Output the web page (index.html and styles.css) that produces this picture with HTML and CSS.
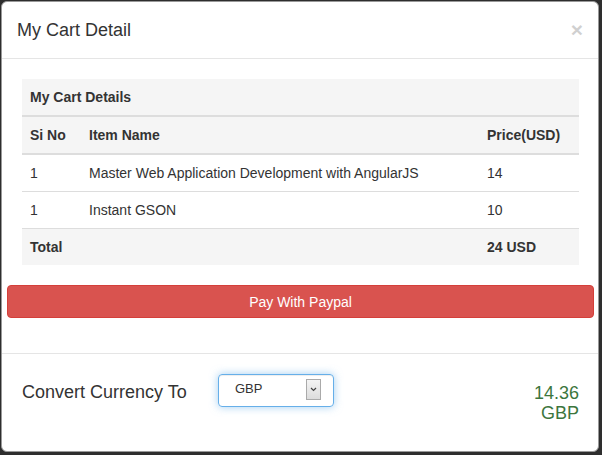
FILE: index.html
```html
<!DOCTYPE html>
<html>
<head>
<meta charset="utf-8">
<link rel="stylesheet" href="styles.css">
</head>
<body>
<div class="modal">
  <div class="modal-header">
    <h4 class="modal-title">My Cart Detail</h4>
    <span class="close">&times;</span>
  </div>
  <div class="modal-body">
    <table class="cart">
      <tr class="caption"><th colspan="3">My Cart Details</th></tr>
      <tr class="head"><th class="c1">Si No</th><th class="c2">Item Name</th><th class="c3">Price(USD)</th></tr>
      <tr><td>1</td><td>Master Web Application Development with AngularJS</td><td>14</td></tr>
      <tr><td>1</td><td>Instant GSON</td><td>10</td></tr>
      <tr class="total"><th>Total</th><th></th><th>24 USD</th></tr>
    </table>
  </div>
  <div class="pay-wrap"><button class="btn-pay">Pay With Paypal</button></div>
  <div class="modal-footer">
    <span class="conv-label">Convert Currency To</span>
    <div class="select">
      <span class="sel-text">GBP</span>
      <span class="sel-arrow"><svg width="7" height="5" viewBox="0 0 7 5"><path d="M1 1 L3.5 3.5 L6 1" fill="none" stroke="#444" stroke-width="1.2"/></svg></span>
    </div>
    <div class="result">14.36 GBP</div>
  </div>
</div>
</body>
</html>
```

FILE: styles.css
```css
* { box-sizing: border-box; }
html, body { margin: 0; padding: 0; }
body {
  background: #2e2e2e;
  font-family: "Liberation Sans", Arial, sans-serif;
  color: #333;
  font-size: 14px;
  line-height: 1.42857;
  height: 455px;
  padding: 1px 3px 3px 1px;
}
.modal {
  background: #fff;
  border: 1px solid #999;
  border-radius: 6px;
  height: 451px;
  display: flex;
  flex-direction: column;
}
.modal-header {
  padding: 15px 15px 15px 15px;
  border-bottom: 1px solid #e5e5e5;
  display: flex;
  justify-content: space-between;
  align-items: center;
  height: 57px;
}
.modal-title {
  margin: 0;
  font-size: 18px;
  font-weight: normal;
  line-height: 26px;
}
.close {
  font-size: 21px;
  font-weight: bold;
  color: #000;
  opacity: 0.18;
  line-height: 1;
  margin-right: 0;
  margin-top: -2px;
}
.modal-body {
  padding: 20px 19px 20px 20px;
}
.cart {
  width: 100%;
  border-collapse: collapse;
}
.cart th, .cart td {
  padding: 8px 8px;
  text-align: left;
  border-top: 1px solid #ddd;
  line-height: 20px;
}
.cart .caption th { border-top: 0; background: #f5f5f5; height: 36px; }
.cart .head th { border-top: 2px solid #ddd; border-bottom: 2px solid #ddd; background: #f5f5f5; }
.cart .c1 { width: 59px; }
.cart .c3 { width: 100px; }
.cart .total th { background: #f5f5f5; }
.pay-wrap {
  padding: 0 4px 0 5px;
}
.btn-pay {
  width: 100%;
  height: 33px;
  background: #d9534f;
  border: 1px solid #d43f3a;
  border-radius: 4px;
  color: #fff;
  font-family: "Liberation Sans", Arial, sans-serif;
  font-size: 14px;
  padding: 0;
}
.modal-footer {
  margin-top: 35px;
  border-top: 1px solid #e5e5e5;
  padding: 20px 19px 0 20px;
  display: flex;
  align-items: flex-start;
}
.conv-label {
  font-size: 18px;
  width: 196px;
  margin-top: 6px;
}
.select {
  width: 116px;
  height: 33px;
  border: 1px solid #66afe9;
  border-radius: 4px;
  box-shadow: inset 0 1px 1px rgba(0,0,0,.075), 0 0 8px rgba(102,175,233,.6);
  display: flex;
  align-items: center;
  padding: 0 12px 0 16px;
  justify-content: space-between;
  font-size: 13px;
  margin-top: 0;
}
.sel-text { margin-top: -2px; }
.sel-arrow {
  width: 15px;
  height: 21px;
  border: 1px solid #aaa;
  background: linear-gradient(#f4f4f4, #dcdcdc);
  display: flex;
  align-items: center;
  justify-content: center;
  margin-top: -2px;
}
.result {
  margin-left: auto;
  width: 60px;
  text-align: right;
  color: #3c763d;
  font-size: 18px;
  line-height: 20px;
  margin-top: 9px;
}
```
